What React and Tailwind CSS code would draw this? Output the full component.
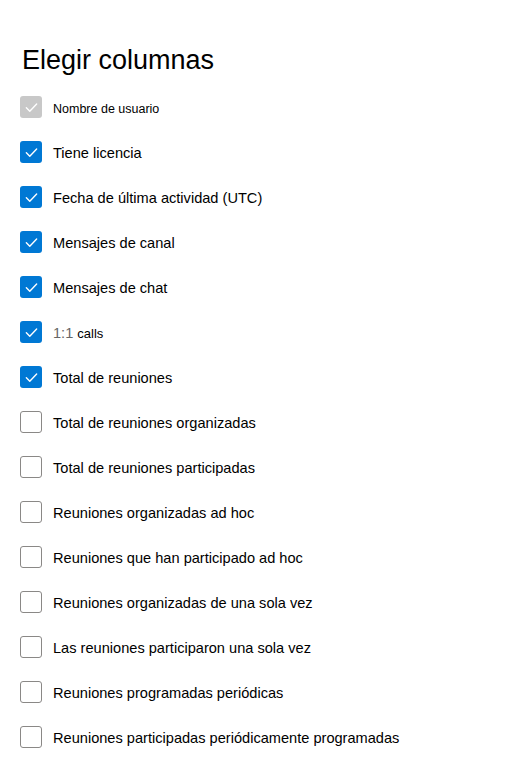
import { useState } from 'react';

const columnas = [
  { label: 'Nombre de usuario', checked: true, disabled: true },
  { label: 'Tiene licencia', checked: true },
  { label: 'Fecha de última actividad (UTC)', checked: true },
  { label: 'Mensajes de canal', checked: true },
  { label: 'Mensajes de chat', checked: true },
  { label: 'calls', prefix: '1:1', checked: true },
  { label: 'Total de reuniones', checked: true },
  { label: 'Total de reuniones organizadas', checked: false },
  { label: 'Total de reuniones participadas', checked: false },
  { label: 'Reuniones organizadas ad hoc', checked: false },
  { label: 'Reuniones que han participado ad hoc', checked: false },
  { label: 'Reuniones organizadas de una sola vez', checked: false },
  { label: 'Las reuniones participaron una sola vez', checked: false },
  { label: 'Reuniones programadas periódicas', checked: false },
  { label: 'Reuniones participadas periódicamente programadas', checked: false },
];

function CheckIcon() {
  return (
    <svg width="15" height="15" viewBox="0 0 14 14" fill="none">
      <path d="M2.2 7.3 L5.4 10.4 L11.8 3.8" stroke="white" strokeWidth="1.3" strokeLinecap="round" strokeLinejoin="round" />
    </svg>
  );
}

function Caja({ checked, disabled }) {
  if (disabled) {
    return (
      <span className="w-[22px] h-[22px] rounded-[3px] bg-[#c8c8c8] flex items-center justify-center shrink-0">
        <CheckIcon />
      </span>
    );
  }
  if (checked) {
    return (
      <span className="w-[22px] h-[22px] rounded-[3px] bg-[#0078d4] flex items-center justify-center shrink-0">
        <CheckIcon />
      </span>
    );
  }
  return <span className="w-[22px] h-[22px] rounded-[3px] border border-[#8a8886] bg-white shrink-0" />;
}

export default function App() {
  const [items, setItems] = useState(columnas);

  const toggle = (index) => {
    const values = [...items];
    if (values[index].disabled) return;
    values[index] = { ...values[index], checked: !values[index].checked };
    setItems(values);
  };

  return (
    <div className="min-h-screen bg-white text-black font-['Liberation_Sans',Arial,sans-serif] pl-5 pt-[44px]">
      <h1 className="text-[27px] leading-[32px] pl-[2px] mb-[20px]">Elegir columnas</h1>
      <div className="flex flex-col gap-[23px]">
        {items.map((item, index) => (
          <label key={index} onClick={() => toggle(index)} className="flex items-center gap-[11px] h-[22px] cursor-pointer select-none">
            <Caja checked={item.checked} disabled={item.disabled} />
            {item.prefix ? (
              <span className="text-[14.6px] whitespace-nowrap pt-[4px]">
                <span className="text-[#666666]">{item.prefix}</span>{' '}
                <span className="text-[13px]">{item.label}</span>
              </span>
            ) : (
              <span className={item.disabled ? 'text-[12.5px] whitespace-nowrap pt-[4px]' : 'text-[14.6px] whitespace-nowrap pt-[4px]'}>
                {item.label}
              </span>
            )}
          </label>
        ))}
      </div>
    </div>
  );
}
